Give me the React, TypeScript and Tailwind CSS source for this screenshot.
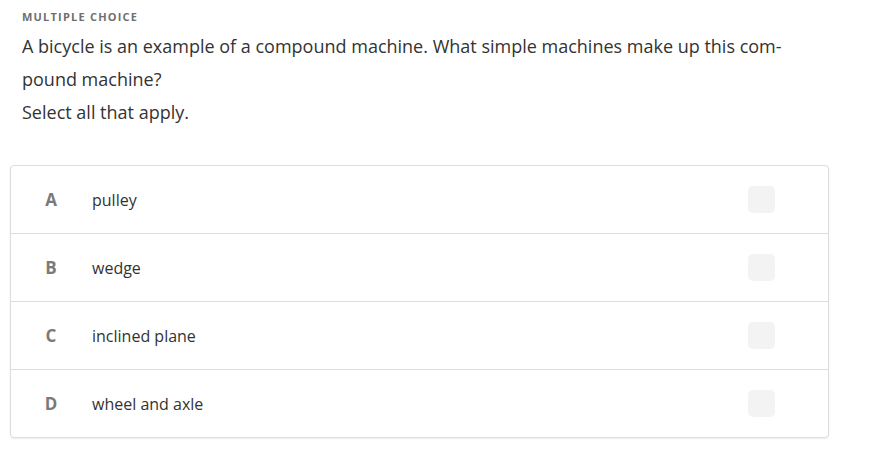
import React from "react";

const options = [
  { letter: "A", text: "pulley" },
  { letter: "B", text: "wedge" },
  { letter: "C", text: "inclined plane" },
  { letter: "D", text: "wheel and axle" },
];

export default function App() {
  return (
    <div className="w-[874px] h-[457px] bg-white pt-[9px]" style={{ fontFamily: '"Open Sans", sans-serif' }}>
      <div className="pl-[22px]">
        <div className="text-[11px] leading-[16px] font-bold tracking-[0.11em] text-[#6f6f6f]">MULTIPLE CHOICE</div>
        <div className="mt-[5px] text-[18px] leading-[33px] text-[#333333]">
          <div className="whitespace-nowrap">A bicycle is an example of a compound machine. What simple machines make up this com-</div>
          <div className="whitespace-nowrap">pound machine?</div>
          <div className="whitespace-nowrap">Select all that apply.</div>
        </div>
      </div>
      <div className="ml-[10px] mt-[36px] w-[819px] border border-[#dddddd] rounded-[4px] shadow-[0_1px_2px_rgba(0,0,0,0.08)] bg-white">
        {options.map((o, i) => (
          <div
            key={o.letter}
            className={`flex items-center ${i < options.length - 1 ? "h-[68px] border-b border-[#dddddd]" : "h-[67px]"}`}
          >
            <div className="w-[80px] text-center text-[17px] font-bold text-[#7a7a7a]">{o.letter}</div>
            <div className="ml-[1px] flex-1 text-[16px] text-[#333333]">{o.text}</div>
            <div className="w-[27px] h-[27px] rounded-[5px] bg-[#f3f3f3] mr-[53px]" />
          </div>
        ))}
      </div>
    </div>
  );
}
